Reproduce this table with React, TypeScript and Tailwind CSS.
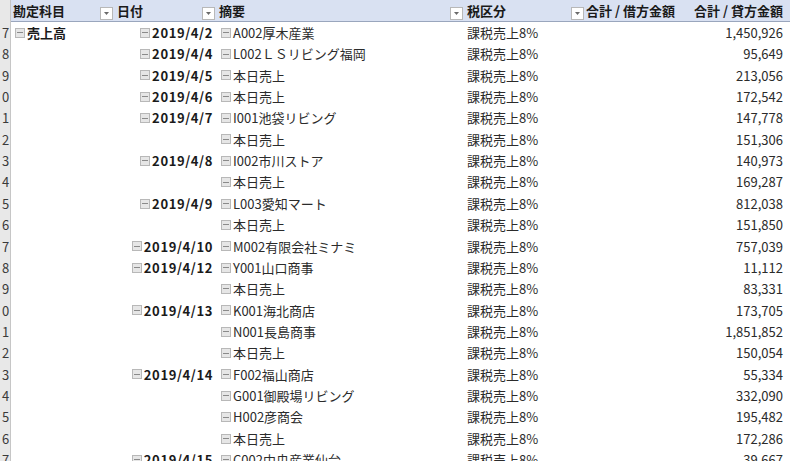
import React from "react";

type Row = {
  no: string;
  account?: string;
  date?: string;
  memo: string;
  credit: string;
};

const rows: Row[] = [
  { no: "17", account: "売上高", date: "2019/4/2", memo: "A002厚木産業", credit: "1,450,926" },
  { no: "18", date: "2019/4/4", memo: "L002ＬＳリビング福岡", credit: "95,649" },
  { no: "19", date: "2019/4/5", memo: "本日売上", credit: "213,056" },
  { no: "20", date: "2019/4/6", memo: "本日売上", credit: "172,542" },
  { no: "21", date: "2019/4/7", memo: "I001池袋リビング", credit: "147,778" },
  { no: "22", memo: "本日売上", credit: "151,306" },
  { no: "23", date: "2019/4/8", memo: "I002市川ストア", credit: "140,973" },
  { no: "24", memo: "本日売上", credit: "169,287" },
  { no: "25", date: "2019/4/9", memo: "L003愛知マート", credit: "812,038" },
  { no: "26", memo: "本日売上", credit: "151,850" },
  { no: "27", date: "2019/4/10", memo: "M002有限会社ミナミ", credit: "757,039" },
  { no: "28", date: "2019/4/12", memo: "Y001山口商事", credit: "11,112" },
  { no: "29", memo: "本日売上", credit: "83,331" },
  { no: "30", date: "2019/4/13", memo: "K001海北商店", credit: "173,705" },
  { no: "31", memo: "N001長島商事", credit: "1,851,852" },
  { no: "32", memo: "本日売上", credit: "150,054" },
  { no: "33", date: "2019/4/14", memo: "F002福山商店", credit: "55,334" },
  { no: "34", memo: "G001御殿場リビング", credit: "332,090" },
  { no: "35", memo: "H002彦商会", credit: "195,482" },
  { no: "36", memo: "本日売上", credit: "172,286" },
  { no: "37", date: "2019/4/15", memo: "C002中央産業仙台", credit: "39,667" },
];

function Collapse() {
  return (
    <span className="inline-flex w-[10px] h-[10px] shrink-0 items-center justify-center border border-[#b8b8b8] bg-[#e6e6e6] mr-[2px]">
      <span className="block w-[6px] h-[1px] bg-[#8a8a8a]" />
    </span>
  );
}

function FilterButton() {
  return (
    <span className="ml-auto mt-auto mb-[1px] flex w-[13px] h-[13px] shrink-0 items-center justify-center border border-[#b8b8b8] bg-white">
      <svg width="5" height="3" viewBox="0 0 5 3">
        <path d="M0 0h5L2.5 3z" fill="#6a6a6a" />
      </svg>
    </span>
  );
}

export default function App() {
  return (
    <div
      className="w-[800px] h-[461px] overflow-hidden bg-white text-[13px] text-[#2b2b2b]"
      style={{ fontFamily: '"Noto Sans CJK JP", "Noto Sans", sans-serif' }}
    >
      {/* header */}
      <div className="flex h-[22px]">
        <div className="w-[11px] shrink-0 bg-[#e8e8e8] border-r border-[#c6c6c6]" />
        <div className="flex w-[779px] shrink-0 bg-[#d9e1f2] border-b border-[#9aa6bd] font-bold text-[#1a1a1a]">
          <div className="flex w-[104px] items-center pl-[2px] pr-[2px]">
            <span className="leading-none">勘定科目</span>
            <FilterButton />
          </div>
          <div className="flex w-[102px] items-center pl-[2px] pr-[2px]">
            <span className="leading-none">日付</span>
            <FilterButton />
          </div>
          <div className="flex w-[248px] items-center pl-[2px] pr-[2px]">
            <span className="leading-none">摘要</span>
            <FilterButton />
          </div>
          <div className="flex w-[120px] items-center pl-[2px] pr-[1px]">
            <span className="leading-none">税区分</span>
            <FilterButton />
          </div>
          <div className="flex w-[101px] items-center pl-[1px]">
            <span className="leading-none whitespace-nowrap">合計 / 借方金額</span>
          </div>
          <div className="flex w-[104px] items-center justify-end pr-[7px]">
            <span className="leading-none whitespace-nowrap">合計 / 貸方金額</span>
          </div>
        </div>
      </div>

      {/* rows */}
      {rows.map((r) => (
        <div key={r.no} className="flex h-[21.37px]">
          <div className="flex w-[11px] shrink-0 items-center pl-[2px] bg-[#e8e8e8] border-r border-[#c6c6c6] text-[#3a3a3a]">
            {r.no.slice(-1)}
          </div>
          <div className="flex w-[104px] items-center pl-[4px]">
            {r.account && (
              <>
                <Collapse />
                <span className="font-bold text-[#1a1a1a]">{r.account}</span>
              </>
            )}
          </div>
          <div className="flex w-[102px] items-center justify-end pr-[4px]">
            {r.date && (
              <>
                <Collapse />
                <span className="font-bold text-[#1a1a1a] tracking-[0.6px]">{r.date}</span>
              </>
            )}
          </div>
          <div className="flex w-[248px] items-center pl-[4px] whitespace-nowrap">
            <Collapse />
            <span>{r.memo}</span>
          </div>
          <div className="flex w-[120px] items-center pl-[2px]">課税売上8%</div>
          <div className="w-[101px]" />
          <div className="flex w-[104px] items-center justify-end pr-[7px]">{r.credit}</div>
        </div>
      ))}
    </div>
  );
}
